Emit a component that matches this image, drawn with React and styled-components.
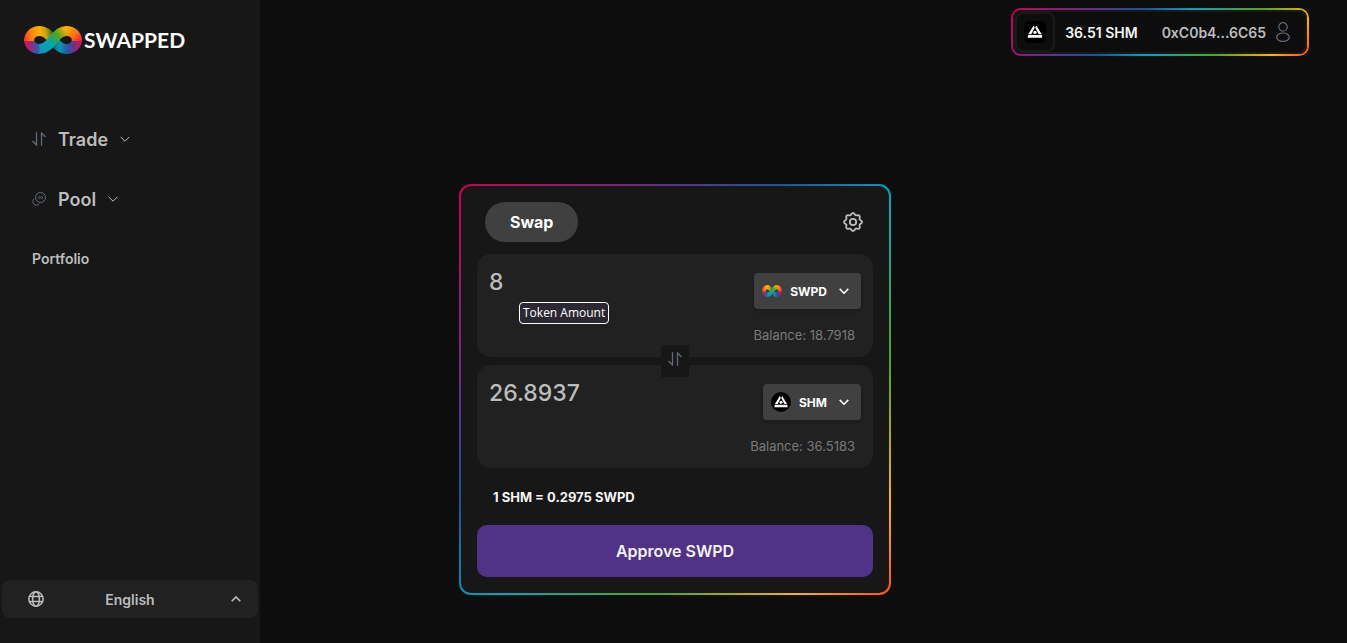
import React, { useState } from 'react';
import styled, { createGlobalStyle, ThemeProvider } from 'styled-components';

const theme = {
  colours: {
    page: '#0d0d0d',
    surface: '#171717',
    panel: '#212121',
    control: '#404040',
    accent: '#503287',
    icon: '#646a7c',
    text: { bright: '#f4f4f4', body: '#bdbdbd', subtle: '#7a7a7a' },
  },
  rainbow:
    'linear-gradient(135deg, #ce0050 0%, #6f2a86 22%, #1d5397 38%, #00a5bf 53%, #55a51c 73%, #ffb400 89%, #ff5500 100%)',
};

const GlobalStyle = createGlobalStyle`
  * {
    box-sizing: border-box;
  }

  body {
    background: ${(props) => props.theme.colours.page};
    font-family: Inter, 'Liberation Sans', sans-serif;
    margin: 0;
  }

  button,
  input {
    font-family: inherit;
  }
`;

const Page = styled.div`
  display: flex;
  min-height: 100vh;
`;

const Sidebar = styled.aside`
  background: ${(props) => props.theme.colours.surface};
  display: flex;
  flex: 0 0 260px;
  flex-direction: column;
  justify-content: space-between;
  padding: 24px 2px 25px;
`;

const Brand = styled.a`
  align-items: center;
  color: #ffffff;
  display: flex;
  font-family: Lato, sans-serif;
  font-size: 21px;
  font-weight: 700;
  gap: 2px;
  height: 32px;
  line-height: 32px;
  margin-left: 22px;
  text-decoration: none;
`;

const Nav = styled.nav`
  display: flex;
  flex-direction: column;
  padding: 53px 30px 0;
`;

const NavButton = styled.button`
  align-items: center;
  background: none;
  border: none;
  color: ${(props) => props.theme.colours.text.body};
  cursor: pointer;
  display: flex;
  font-size: 18px;
  font-weight: 600;
  gap: 12px;
  height: 60px;
  padding: 0;
`;

const NavLink = styled.a`
  color: ${(props) => props.theme.colours.text.body};
  font-size: 14px;
  font-weight: 600;
  line-height: 60px;
  text-decoration: none;
`;

const LanguageButton = styled.button`
  align-items: center;
  background: ${(props) => props.theme.colours.panel};
  border: none;
  border-radius: 8px;
  color: ${(props) => props.theme.colours.text.body};
  cursor: pointer;
  display: grid;
  font-size: 14px;
  font-weight: 600;
  grid-template-columns: 1fr auto 1fr;
  height: 38px;
  padding: 0 17px;

  svg:first-child {
    margin-left: 9px;
  }

  svg:last-child {
    justify-self: end;
  }
`;

const Content = styled.div`
  flex: 1;
  min-width: 0;
`;

const TopBar = styled.header`
  display: flex;
  height: 64px;
  justify-content: flex-end;
  padding: 8px 38px 0 0;
`;

const Wallet = styled.button`
  align-items: center;
  background: linear-gradient(${(props) => props.theme.colours.page} 0 0) padding-box,
    ${(props) => props.theme.rainbow} border-box;
  border: 2px solid transparent;
  border-radius: 10px;
  box-shadow: inset 0 0 0 2px #181818;
  color: ${(props) => props.theme.colours.text.body};
  cursor: pointer;
  display: flex;
  font-size: 14px;
  font-weight: 600;
  height: 48px;
  padding: 0 17px 0 2px;
`;

const Avatar = styled.span`
  align-items: center;
  border: 2px solid #1a1a1a;
  border-radius: 8px;
  display: flex;
  height: 40px;
  justify-content: center;
  width: 40px;
`;

const WalletBalance = styled.span`
  color: ${(props) => props.theme.colours.text.bright};
  margin: 0 24px 0 10px;
`;

const Address = styled.span`
  margin-right: 10px;
`;

const Main = styled.main`
  display: flex;
  justify-content: center;
  padding: 120px 257px 48px 0;
`;

const Card = styled.form`
  background: linear-gradient(${(props) => props.theme.colours.surface} 0 0)
      padding-box,
    ${(props) => props.theme.rainbow} border-box;
  border: 2px solid transparent;
  border-radius: 12px;
  display: flex;
  flex-direction: column;
  max-width: 432px;
  padding: 16px;
  width: 100%;
`;

const CardHeader = styled.div`
  align-items: center;
  display: flex;
  justify-content: space-between;
  margin-bottom: 12px;
  padding: 0 8px;
`;

const SwapTab = styled.button`
  background: ${(props) => props.theme.colours.control};
  border: none;
  border-radius: 20px;
  color: #ffffff;
  font-size: 16px;
  font-weight: 700;
  height: 40px;
  padding: 0 25px;
`;

const IconButton = styled.button`
  background: none;
  border: none;
  color: ${(props) => props.theme.colours.text.body};
  cursor: pointer;
  display: flex;
  padding: 0 2px;
`;

const Panel = styled.section`
  background: ${(props) => props.theme.colours.panel};
  border-radius: 14px;
  display: flex;
  justify-content: space-between;
  padding: 14px 12px 12px;
`;

const AmountField = styled.label`
  flex: 1;
  min-width: 0;
  position: relative;
`;

const AmountInput = styled.input`
  background: none;
  border: none;
  color: ${(props) => props.theme.colours.text.body};
  display: block;
  font-size: 23px;
  font-weight: 500;
  height: 28px;
  outline: none;
  padding: 0;
  width: 100%;
`;

const Tooltip = styled.span`
  background: #2b2833;
  border: 1px solid #ffffff;
  border-radius: 4px;
  color: #ffffff;
  font-family: 'Open Sans', sans-serif;
  font-size: 12px;
  left: 30px;
  line-height: 20px;
  padding: 0 3px;
  position: absolute;
  top: 34px;
  white-space: nowrap;
`;

const TokenSide = styled.div`
  align-items: flex-end;
  display: flex;
  flex-direction: column;
  gap: 16px;
  padding-top: 5px;
`;

const TokenButton = styled.button`
  align-items: center;
  background: ${(props) => props.theme.colours.control};
  border: none;
  border-radius: 4px;
  box-shadow: 0 2px 4px rgba(0, 0, 0, 0.2);
  color: #ffffff;
  cursor: pointer;
  display: flex;
  font-size: 12px;
  font-weight: 700;
  gap: 8px;
  height: 36px;
  padding: 0 12px 0 8px;

  svg:last-child {
    margin-left: 4px;
  }
`;

const Balance = styled.span`
  color: ${(props) => props.theme.colours.text.subtle};
  font-size: 13px;
  line-height: 20px;
  margin-right: 6px;
`;

const SwitchButton = styled.button`
  align-items: center;
  align-self: center;
  background: ${(props) => props.theme.colours.surface};
  border: none;
  color: ${(props) => props.theme.colours.icon};
  cursor: pointer;
  display: flex;
  height: 32px;
  justify-content: center;
  margin: -12px 0;
  padding: 0 0 4px;
  width: 28px;
  z-index: 1;
`;

const Rate = styled.p`
  border-radius: 12px;
  border-top: 1px solid #151515;
  color: ${(props) => props.theme.colours.text.bright};
  font-size: 13px;
  font-weight: 700;
  line-height: 32px;
  margin: 12px 0;
  padding: 0 16px;
`;

const ApproveButton = styled.button`
  background: ${(props) => props.theme.colours.accent};
  border: none;
  border-radius: 10px;
  color: ${(props) => props.theme.colours.text.bright};
  cursor: pointer;
  font-size: 16px;
  font-weight: 600;
  height: 52px;
`;

const InfinityLogo = ({ id, width, height }) => (
  <svg
    width={width}
    height={height}
    viewBox="0 0 58 28"
    preserveAspectRatio="none"
    aria-hidden="true"
  >
    <defs>
      <linearGradient id={`${id}-top`} x1="0" y1="18" x2="34" y2="12" gradientUnits="userSpaceOnUse">
        <stop offset="0" stopColor="#f0283c" />
        <stop offset="0.2" stopColor="#ff7410" />
        <stop offset="0.5" stopColor="#ffb400" />
        <stop offset="0.68" stopColor="#d0a008" />
        <stop offset="0.85" stopColor="#3f7818" />
      </linearGradient>
      <linearGradient id={`${id}-left`} x1="0" x2="22" gradientUnits="userSpaceOnUse">
        <stop offset="0" stopColor="#e4104c" />
        <stop offset="0.35" stopColor="#8a2c88" />
        <stop offset="0.65" stopColor="#2a62a4" />
        <stop offset="1" stopColor="#00a5bf" />
      </linearGradient>
      <linearGradient id={`${id}-right`} x1="30" x2="58" gradientUnits="userSpaceOnUse">
        <stop offset="0" stopColor="#0a6c78" />
        <stop offset="0.2" stopColor="#0898b4" />
        <stop offset="0.45" stopColor="#2060a4" />
        <stop offset="0.7" stopColor="#6a3090" />
        <stop offset="1" stopColor="#e01050" />
      </linearGradient>
      <linearGradient id={`${id}-end`} x1="42" y1="2" x2="56" y2="16" gradientUnits="userSpaceOnUse">
        <stop offset="0" stopColor="#ffb400" />
        <stop offset="0.6" stopColor="#ff6a10" />
        <stop offset="1" stopColor="#f01c3c" />
      </linearGradient>
      <linearGradient id={`${id}-band`} x1="18" y1="24" x2="42" y2="4" gradientUnits="userSpaceOnUse">
        <stop offset="0" stopColor="#0898bc" />
        <stop offset="0.35" stopColor="#06a5b0" />
        <stop offset="0.7" stopColor="#55a51c" />
        <stop offset="1" stopColor="#f8b200" />
      </linearGradient>
    </defs>
    <g fill="none" strokeWidth="10">
      <path stroke={`url(#${id}-left)`} d="M5 13C5 19 9.500 23 16 23" />
      <path stroke={`url(#${id}-top)`} d="M5 15C5 9 9.500 5 16 5C22 5 26 10 29 14" />
      <path
        stroke={`url(#${id}-right)`}
        d="M29 14C32 18 36 23 42 23C48.500 23 53 19 53 13"
      />
      <path stroke={`url(#${id}-end)`} d="M42 5C48.500 5 53 9 53 15" />
      <path stroke={`url(#${id}-band)`} d="M15.500 23C22 23 26 18 29 14C32 10 36 5 42.500 5" />
    </g>
  </svg>
);

const ShardeumMark = ({ size, radius }) => (
  <svg width={size} height={size} viewBox="0 0 20 20" aria-hidden="true">
    <rect width="20" height="20" rx={radius} fill="#000000" />
    <g fill="#ffffff">
      <path d="M8.800 4L9.800 6L6.600 12H3.900z" />
      <path d="M11.200 4L16.100 12H13.400L10.200 6z" />
      <path d="M3.700 12.800H16.300L16.600 15.300H3.400z" />
      <circle cx="10" cy="10.300" r="1.500" />
    </g>
  </svg>
);

const ArrowsIcon = () => (
  <svg
    width="14"
    height="14"
    viewBox="0 0 14 14"
    fill="none"
    stroke="#646a7c"
    strokeWidth="1.300"
    aria-hidden="true"
  >
    <path d="M0.500 9L4.500 13V0.300M9.500 13.700V1L13.500 5" />
  </svg>
);

const PoolIcon = () => (
  <svg width="14" height="14" viewBox="0 0 14 14" fill="none" stroke="#646a7c" aria-hidden="true">
    <circle cx="8.500" cy="5.500" r="5" />
    <path d="M2.400 6.600A3.600 3.600 0 1 0 7.300 11.700" />
    <path d="M8.500 5.500L7.300 4.300L6.100 5.500L7.300 6.700zM8.500 5.500L9.700 4.300L10.900 5.500L9.700 6.700z" />
  </svg>
);

const Chevron = ({ up = false, strokeWidth = 1.6 }) => (
  <svg
    width="10"
    height="10"
    viewBox="0 0 10 10"
    fill="none"
    stroke="currentColor"
    strokeWidth={strokeWidth}
    aria-hidden="true"
  >
    <path d={up ? 'M0.700 7.200L5 2.900L9.300 7.200' : 'M0.700 2.900L5 7.200L9.300 2.900'} />
  </svg>
);

const GlobeIcon = () => (
  <svg
    width="16"
    height="16"
    viewBox="0 0 16 16"
    fill="none"
    stroke="currentColor"
    strokeWidth="1.500"
    aria-hidden="true"
  >
    <circle cx="8" cy="8" r="7.200" />
    <ellipse cx="8" cy="8" rx="3.400" ry="7.200" />
    <path d="M1.300 5.500H14.700M1.300 10.500H14.700" />
  </svg>
);

const UserIcon = () => (
  <svg
    width="14"
    height="20"
    viewBox="0 0 14 20"
    fill="none"
    stroke="#646a7c"
    strokeWidth="1.200"
    aria-hidden="true"
  >
    <circle cx="7" cy="4.900" r="4.200" />
    <ellipse cx="7" cy="15.200" rx="6.300" ry="4.200" />
  </svg>
);

// eight rounded teeth around a circle
const gearOutline = Array.from({ length: 96 }, (_, i) => {
  const angle = (i / 96) * Math.PI * 2;
  const radius = 8.1 + 0.9 * Math.cos(angle * 8);
  const x = 10 + radius * Math.cos(angle);
  const y = 10 + radius * Math.sin(angle);
  return `${x.toFixed(2)},${y.toFixed(2)}`;
}).join(' ');

const GearIcon = () => (
  <svg
    width="20"
    height="20"
    viewBox="0 0 20 20"
    fill="none"
    stroke="currentColor"
    strokeWidth="1.800"
    strokeLinejoin="round"
    aria-hidden="true"
  >
    <circle cx="10" cy="10" r="3.200" />
    <polygon points={gearOutline} />
  </svg>
);

const TokenPanel = ({ label, amount, onChange, symbol, icon, balance, hint }) => (
  <Panel>
    <AmountField>
      <AmountInput aria-label={label} value={amount} onChange={onChange} />
      {hint && <Tooltip role="tooltip">{hint}</Tooltip>}
    </AmountField>
    <TokenSide>
      <TokenButton type="button">
        {icon}
        {symbol}
        <Chevron />
      </TokenButton>
      <Balance>{`Balance: ${balance}`}</Balance>
    </TokenSide>
  </Panel>
);

const App = () => {
  const [from, setFrom] = useState('8');
  const [to, setTo] = useState('26.8937');

  return (
    <ThemeProvider theme={theme}>
      <GlobalStyle />
      <Page>
        <Sidebar>
          <div>
            <Brand href="#home">
              <InfinityLogo id="brand" width={58} height={28} />
              SWAPPED
            </Brand>
            <Nav>
              <NavButton type="button">
                <ArrowsIcon />
                Trade
                <Chevron strokeWidth={1} />
              </NavButton>
              <NavButton type="button">
                <PoolIcon />
                Pool
                <Chevron strokeWidth={1} />
              </NavButton>
              <NavLink href="#portfolio">Portfolio</NavLink>
            </Nav>
          </div>
          <LanguageButton type="button">
            <GlobeIcon />
            English
            <Chevron up />
          </LanguageButton>
        </Sidebar>
        <Content>
          <TopBar>
            <Wallet type="button">
              <Avatar>
                <ShardeumMark size={22} radius={5} />
              </Avatar>
              <WalletBalance>36.51 SHM</WalletBalance>
              <Address>0xC0b4...6C65</Address>
              <UserIcon />
            </Wallet>
          </TopBar>
          <Main>
            <Card onSubmit={(event) => event.preventDefault()}>
              <CardHeader>
                <SwapTab type="button">Swap</SwapTab>
                <IconButton type="button" aria-label="Settings">
                  <GearIcon />
                </IconButton>
              </CardHeader>
              <TokenPanel
                label="Amount to pay"
                amount={from}
                onChange={(event) => setFrom(event.target.value)}
                symbol="SWPD"
                icon={<InfinityLogo id="token" width={20} height={12} />}
                balance="18.7918"
                hint="Token Amount"
              />
              <SwitchButton type="button" aria-label="Switch tokens">
                <ArrowsIcon />
              </SwitchButton>
              <TokenPanel
                label="Amount to receive"
                amount={to}
                onChange={(event) => setTo(event.target.value)}
                symbol="SHM"
                icon={<ShardeumMark size={20} radius={10} />}
                balance="36.5183"
              />
              <Rate>1 SHM = 0.2975 SWPD</Rate>
              <ApproveButton type="submit">Approve SWPD</ApproveButton>
            </Card>
          </Main>
        </Content>
      </Page>
    </ThemeProvider>
  );
};

export default App;
